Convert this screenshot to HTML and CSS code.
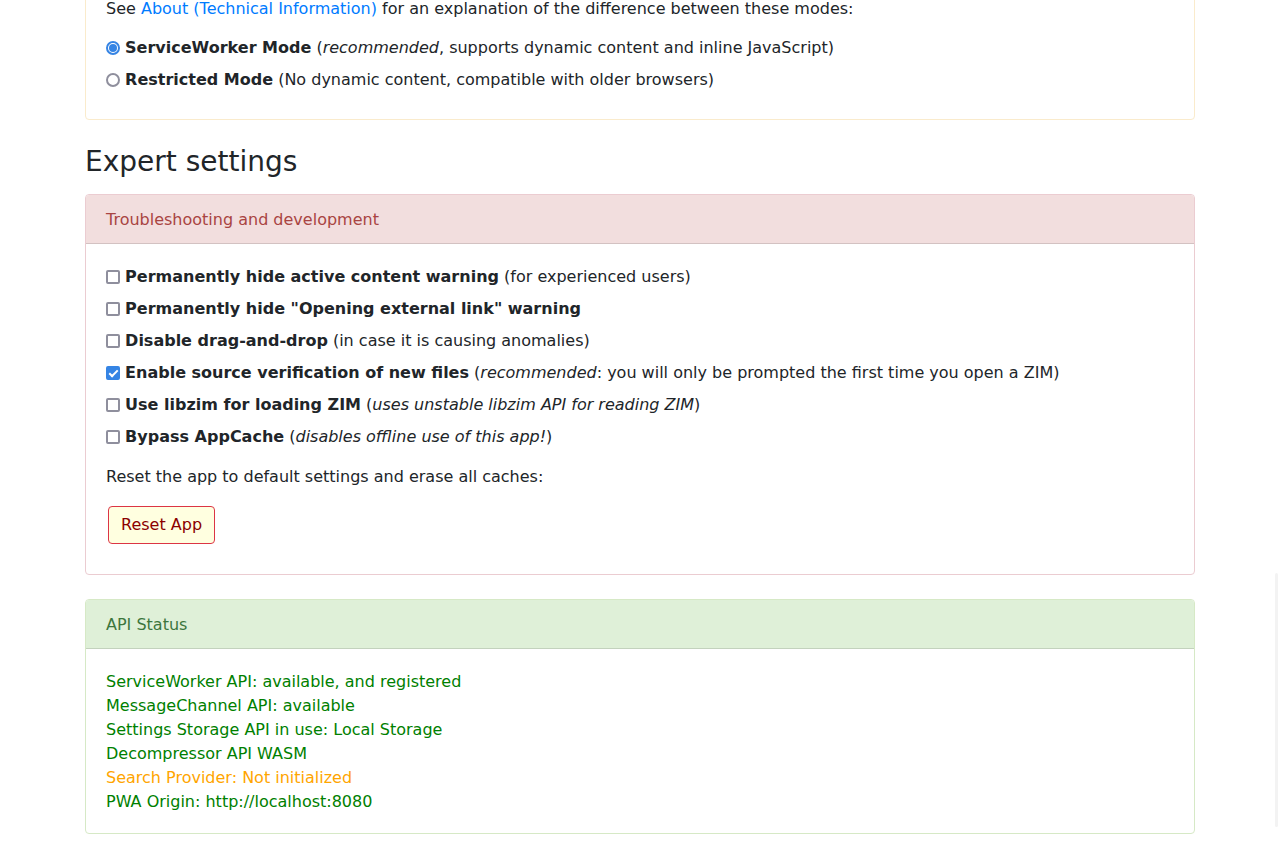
FILE: index.html
```html
<!DOCTYPE html>
<html lang="en">
<head>
<meta charset="utf-8">
<title>Configuration</title>
<link rel="stylesheet" href="styles.css">
</head>
<body>
<div class="container">
  <div class="card card-warning card-first">
    <div class="card-body">
      <p class="intro">See <a href="#" class="link">About (Technical Information)</a> for an explanation of the difference between these modes:</p>
      <div class="opt-list">
        <label class="opt"><input type="radio" class="ctl ctl-radio" name="mode" checked> <strong>ServiceWorker Mode</strong> (<em>recommended</em>, supports dynamic content and inline JavaScript)</label>
        <label class="opt"><input type="radio" class="ctl ctl-radio" name="mode"> <strong>Restricted Mode</strong> (No dynamic content, compatible with older browsers)</label>
      </div>
    </div>
  </div>

  <h3 class="section-title">Expert settings</h3>

  <div class="card card-danger">
    <div class="card-header">Troubleshooting and development</div>
    <div class="card-body">
      <div class="opt-list opt-group">
        <label class="opt"><input type="checkbox" class="ctl ctl-check"> <strong>Permanently hide active content warning</strong> (for experienced users)</label>
        <label class="opt"><input type="checkbox" class="ctl ctl-check"> <strong>Permanently hide "Opening external link" warning</strong></label>
        <label class="opt"><input type="checkbox" class="ctl ctl-check"> <strong>Disable drag-and-drop</strong> (in case it is causing anomalies)</label>
        <label class="opt"><input type="checkbox" class="ctl ctl-check" checked> <strong>Enable source verification of new files</strong> (<em>recommended</em>: you will only be prompted the first time you open a ZIM)</label>
        <label class="opt"><input type="checkbox" class="ctl ctl-check"> <strong>Use libzim for loading ZIM</strong> (<em>uses unstable libzim API for reading ZIM</em>)</label>
        <label class="opt"><input type="checkbox" class="ctl ctl-check"> <strong>Bypass AppCache</strong> (<em>disables offline use of this app!</em>)</label>
      </div>
      <p class="reset-text">Reset the app to default settings and erase all caches:</p>
      <div class="btn-row">
        <button type="button" class="btn-reset">Reset App</button>
      </div>
    </div>
  </div>

  <div class="card card-success">
    <div class="card-header">API Status</div>
    <div class="card-body">
      <div class="status ok">ServiceWorker API: available, and registered</div>
      <div class="status ok">MessageChannel API: available</div>
      <div class="status ok">Settings Storage API in use: Local Storage</div>
      <div class="status ok">Decompressor API WASM</div>
      <div class="status warn">Search Provider: Not initialized</div>
      <div class="status ok">PWA Origin: http://localhost:8080</div>
    </div>
  </div>
</div>
<div class="scroll-thumb"></div>
</body>
</html>
```

FILE: styles.css
```css
html, body {
  margin: 0;
  padding: 0;
  background: #ffffff;
}

body {
  font-family: "DejaVu Sans", sans-serif;
  font-size: 16px;
  line-height: 1.5;
  color: #212529;
  overflow: hidden;
}

.container {
  max-width: 1110px;
  padding: 0 15px;
  margin: 0 auto;
}

p {
  margin: 0;
}

.card {
  border: 1px solid rgba(0, 0, 0, 0.125);
  border-radius: 4px;
  margin-bottom: 24px;
  background: #fff;
  overflow: hidden;
}

.card-first {
  margin-top: -25px;
  margin-bottom: 25px;
}

.card-first .card-body {
  padding-bottom: 19px;
}

.card-warning {
  border-color: #faebcc;
}

.card-danger {
  border-color: #ebccd1;
}

.card-success {
  border-color: #d6e9c6;
}

.card-header {
  padding: 13px 20px 11px;
  border-bottom: 1px solid rgba(0, 0, 0, 0.125);
}

.card-danger .card-header {
  background: #f2dede;
  color: #a94442;
}

.card-success .card-header {
  background: #dff0d8;
  color: #3c763d;
}

.card-body {
  padding: 21px 20px 19px;
}

.intro {
  margin-bottom: 15px;
}

.link {
  color: #007bff;
  text-decoration: none;
}

.opt-list {
  display: flex;
  flex-direction: column;
  gap: 8px;
}

.card-first .opt-list {
  margin-bottom: 8px;
}

.opt-group {
  margin-bottom: 16px;
}

.opt {
  display: block;
}

.opt strong {
  font-weight: bold;
}

.opt em {
  font-style: italic;
}

.ctl {
  -webkit-appearance: none;
  appearance: none;
  box-sizing: border-box;
  position: relative;
  width: 14px;
  height: 14px;
  margin: 0;
  padding: 0;
  border: 2px solid #8f8f9d;
  background: #fff;
  vertical-align: -2px;
}

.ctl-check {
  border-radius: 2px;
}

.ctl-check:checked {
  background: #3584e4;
  border-color: #3584e4;
}

.ctl-check:checked::after {
  content: "";
  position: absolute;
  left: 3px;
  top: 0px;
  width: 3px;
  height: 7px;
  border: solid #fff;
  border-width: 0 2px 2px 0;
  transform: rotate(45deg);
}

.ctl-radio {
  border-radius: 50%;
}

.ctl-radio:checked {
  border-color: #3584e4;
}

.ctl-radio:checked::after {
  content: "";
  position: absolute;
  left: 1px;
  top: 1px;
  width: 8px;
  height: 8px;
  border-radius: 50%;
  background: #3584e4;
}

.section-title {
  font-size: 28px;
  font-weight: 500;
  line-height: 1.2;
  margin: 0 0 15px 0;
}

.reset-text {
  margin-bottom: 15px;
}

.btn-row {
  display: flex;
  margin-bottom: 9px;
}

.btn-reset {
  margin: 2px;
  font-family: "DejaVu Sans", sans-serif;
  font-size: 16px;
  line-height: 24px;
  padding: 6px 12px;
  color: #8b0000;
  background: #ffffe0;
  border: 1px solid #dc3545;
  border-radius: 4px;
}

.status.ok {
  color: #008000;
}

.status.warn {
  color: #ffa500;
}

.scroll-thumb {
  position: fixed;
  right: 2px;
  top: 573px;
  width: 3px;
  height: 254px;
  background: #f3f3f3;
  border-radius: 2px;
}
```
